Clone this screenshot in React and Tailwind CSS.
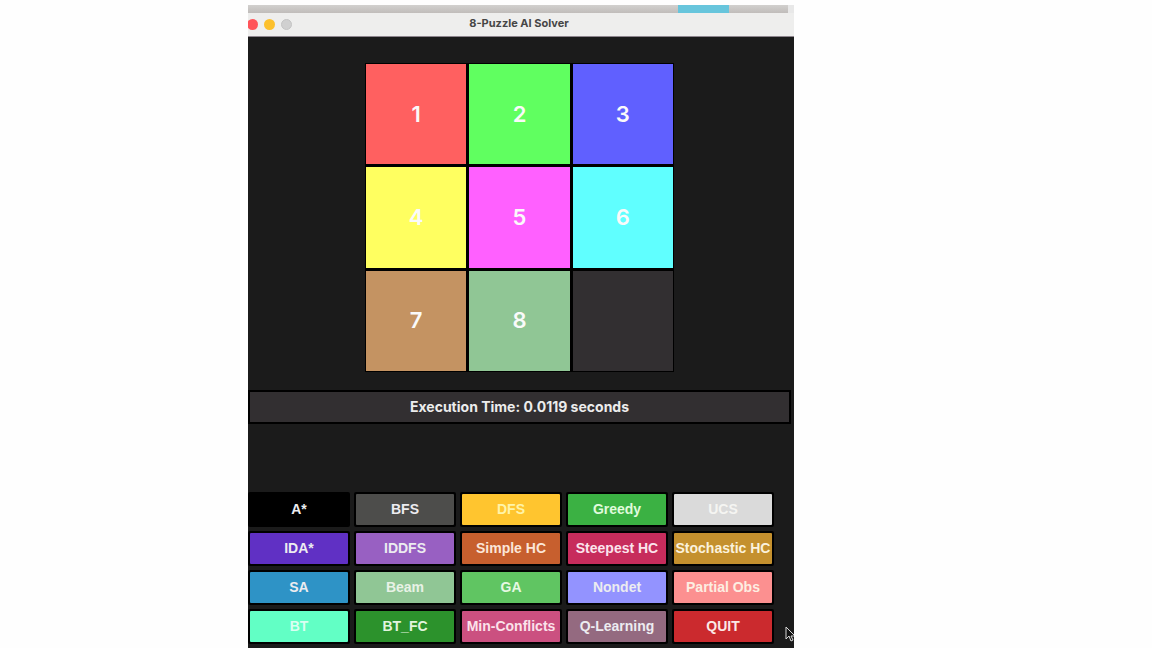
const tiles = [
  { value: 1, color: 'bg-[#ff6060]' },
  { value: 2, color: 'bg-[#60ff60]' },
  { value: 3, color: 'bg-[#6060ff]' },
  { value: 4, color: 'bg-[#ffff60]' },
  { value: 5, color: 'bg-[#ff60ff]' },
  { value: 6, color: 'bg-[#60ffff]' },
  { value: 7, color: 'bg-[#c49362]' },
  { value: 8, color: 'bg-[#90c695]' },
  { value: null, color: 'bg-[#322f31]' },
];

const actions = [
  { label: 'A*', color: 'bg-black' },
  { label: 'BFS', color: 'bg-[#4d4d4b]' },
  { label: 'DFS', color: 'bg-[#ffc52f]', text: 'text-[#fff4a8]' },
  { label: 'Greedy', color: 'bg-[#3bb143]', text: 'text-[#e0fbdc]' },
  { label: 'UCS', color: 'bg-[#dadada]', text: 'text-[#f5f5f2]' },
  { label: 'IDA*', color: 'bg-[#6030c4]' },
  { label: 'IDDFS', color: 'bg-[#9860c2]' },
  { label: 'Simple HC', color: 'bg-[#c75f2e]', text: 'text-[#fbe6d8]' },
  { label: 'Steepest HC', color: 'bg-[#c72c5c]', text: 'text-[#fbe4ec]' },
  { label: 'Stochastic HC', color: 'bg-[#c4902e]', text: 'text-[#fbf2dc]' },
  { label: 'SA', color: 'bg-[#2e93c6]' },
  { label: 'Beam', color: 'bg-[#90c695]', text: 'text-[#e8f2e6]' },
  { label: 'GA', color: 'bg-[#60c562]', text: 'text-[#e6f8e2]' },
  { label: 'Nondet', color: 'bg-[#9393ff]' },
  { label: 'Partial Obs', color: 'bg-[#fc9090]', text: 'text-[#fdeee2]' },
  { label: 'BT', color: 'bg-[#62ffc5]', text: 'text-[#dafff2]' },
  { label: 'BT_FC', color: 'bg-[#2c922c]', text: 'text-[#e2f4de]' },
  { label: 'Min-Conflicts', color: 'bg-[#cb5080]', text: 'text-[#fbe2ea]' },
  { label: 'Q-Learning', color: 'bg-[#946a80]' },
  { label: 'QUIT', color: 'bg-[#cb2a2e]', text: 'text-[#fbe8e6]' },
];

function TitleBar() {
  return (
    <header className="grid h-6 grid-cols-[1fr_auto_1fr] items-center border-b border-[#8d858d] bg-[#eeeeed] pr-1">
      <div className="-ml-px flex gap-[6px]">
        <span className="size-[11px] rounded-full bg-[#ff5459]" />
        <span className="size-[11px] rounded-full bg-[#fcc02c]" />
        <span className="size-[11px] rounded-full border border-[#c4c4c4] bg-[#d0d0d0]" />
      </div>
      <h1 className="pb-1 font-['Inter',sans-serif] text-[11px] leading-4 font-bold text-[#464646]">
        8-Puzzle AI Solver
      </h1>
    </header>
  );
}

function Cursor() {
  return (
    <svg className="absolute -right-px bottom-[5px] h-[18px] w-[10px]" viewBox="0 0 10 18" aria-hidden="true">
      <path
        d="M1 2v12l3-3 2 5 2-1-2-4h4z"
        fill="#111"
        stroke="#d8d8d8"
        strokeWidth="1"
      />
    </svg>
  );
}

export default function App() {
  return (
    <div className="flex min-h-screen justify-center bg-[#fefefe] pt-[5px] pr-[110px] font-['Liberation_Sans',Arial,sans-serif]">
      <div className="relative flex w-full max-w-[546px] flex-col overflow-hidden bg-[#1b1b1b]">
        <div className="flex h-2 bg-linear-to-b from-[#d2d0ce] to-[#c0bcba]">
          <span className="grow" />
          <span className="w-[51px] bg-[#67c5dc]" />
          <span className="w-[59px]" />
          <span className="w-[6px] bg-[#e8e8e8]" />
        </div>
        <TitleBar />
        <main className="flex flex-col pt-[26px] pb-1">
          <div className="mr-[3px] flex flex-col">
            <div className="grid w-[309px] grid-cols-3 gap-[3px] self-center bg-black p-px">
              {tiles.map((tile, i) => (
                <div
                  key={i}
                  className={`flex aspect-square items-center justify-center font-['Inter',sans-serif] text-[22px] font-semibold text-[#fafafa] ${tile.color}`}
                >
                  {tile.value}
                </div>
              ))}
            </div>
            <p className="mt-[18px] border-2 border-black bg-[#322f31] py-[5px] text-center font-['Inter',sans-serif] text-sm leading-5 font-bold text-[#ececec]">
              Execution Time: 0.0119 seconds
            </p>
          </div>
          <div className="mt-[68px] mr-5 grid grid-cols-5 gap-1">
            {actions.map((action) => (
              <button
                key={action.label}
                type="button"
                className="rounded-xs bg-black p-[2px] text-sm leading-[31px] font-bold whitespace-nowrap"
              >
                <span
                  className={`flex justify-center rounded-[1px] ${action.color} ${action.text ?? 'text-[#ececf0]'}`}
                >
                  {action.label}
                </span>
              </button>
            ))}
          </div>
        </main>
        <Cursor />
      </div>
    </div>
  );
}
